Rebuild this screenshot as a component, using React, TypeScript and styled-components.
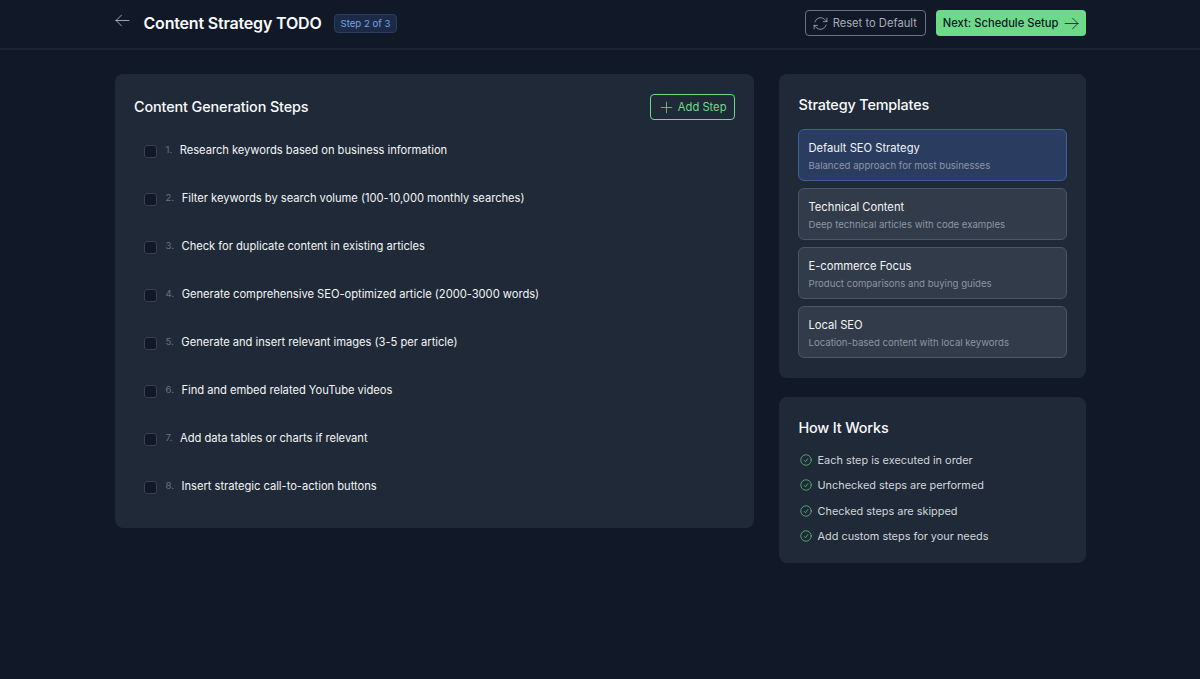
import styled, { createGlobalStyle } from 'styled-components';
import { HiOutlineArrowLeft, HiOutlineArrowPath, HiOutlineArrowRight, HiOutlineCheckCircle, HiOutlinePlus } from 'react-icons/hi2';

const steps = [
    'Research keywords based on business information',
    'Filter keywords by search volume (100-10,000 monthly searches)',
    'Check for duplicate content in existing articles',
    'Generate comprehensive SEO-optimized article (2000-3000 words)',
    'Generate and insert relevant images (3-5 per article)',
    'Find and embed related YouTube videos',
    'Add data tables or charts if relevant',
    'Insert strategic call-to-action buttons',
];

const templates = [
    { name: 'Default SEO Strategy', text: 'Balanced approach for most businesses', active: true },
    { name: 'Technical Content', text: 'Deep technical articles with code examples', active: false },
    { name: 'E-commerce Focus', text: 'Product comparisons and buying guides', active: false },
    { name: 'Local SEO', text: 'Location-based content with local keywords', active: false },
];

const rules = [
    'Each step is executed in order',
    'Unchecked steps are performed',
    'Checked steps are skipped',
    'Add custom steps for your needs',
];

export default function App() {
    return (
        <>
            <GlobalStyle />
            <Header>
                <HeaderInner>
                    <HeaderLeft>
                        <BackLink aria-label="Back">
                            <HiOutlineArrowLeft size={17} strokeWidth={1.1} />
                        </BackLink>
                        <Title>Content Strategy TODO</Title>
                        <StepBadge>Step 2 of 3</StepBadge>
                    </HeaderLeft>
                    <HeaderActions>
                        <ResetButton>
                            <HiOutlineArrowPath size={17} strokeWidth={1.1} />
                            Reset to Default
                        </ResetButton>
                        <NextButton>
                            Next: Schedule Setup
                            <HiOutlineArrowRight size={17} strokeWidth={1.1} />
                        </NextButton>
                    </HeaderActions>
                </HeaderInner>
            </Header>
            <Main>
                <StepsCard>
                    <StepsHeader>
                        <StepsTitle>Content Generation Steps</StepsTitle>
                        <AddButton>
                            <HiOutlinePlus size={17} strokeWidth={1.1} />
                            Add Step
                        </AddButton>
                    </StepsHeader>
                    <StepList>
                        {steps.map((step, i) => (
                            <StepRow key={step}>
                                <Checkbox />
                                <StepNumber>{i + 1}.</StepNumber>
                                <StepText>{step}</StepText>
                            </StepRow>
                        ))}
                    </StepList>
                </StepsCard>
                <Sidebar>
                    <SideCard>
                        <SideTitle>Strategy Templates</SideTitle>
                        <TemplateList>
                            {templates.map((t) => (
                                <TemplateItem key={t.name} $active={t.active}>
                                    <TemplateName>{t.name}</TemplateName>
                                    <TemplateText>{t.text}</TemplateText>
                                </TemplateItem>
                            ))}
                        </TemplateList>
                    </SideCard>
                    <SideCard>
                        <SideTitle>How It Works</SideTitle>
                        <RuleList>
                            {rules.map((rule) => (
                                <RuleItem key={rule}>
                                    <HiOutlineCheckCircle size={14} strokeWidth={1.1} color="#6fd98a" />
                                    {rule}
                                </RuleItem>
                            ))}
                        </RuleList>
                    </SideCard>
                </Sidebar>
            </Main>
        </>
    );
}

const GlobalStyle = createGlobalStyle`
    html, body {
        margin: 0;
        min-height: 100%;
        background: #111827;
        font-family: Inter, "Liberation Sans", sans-serif;
        color: #f3f4f6;
    }
    * {
        box-sizing: border-box;
    }
`;

const Header = styled.header`
    height: 50px;
    border-bottom: 2px solid #1c2431;
`;

const HeaderInner = styled.div`
    width: 971px;
    margin: 0 auto;
    height: 100%;
    display: flex;
    justify-content: space-between;
    padding-top: 10px;
`;

const HeaderLeft = styled.div`
    display: flex;
    align-items: flex-start;
`;

const BackLink = styled.a`
    width: 30px;
    height: 20px;
    margin-left: -1px;
    color: #c7ccd4;
    display: flex;
    align-items: center;
`;

const Title = styled.h1`
    margin: 3px 12px 0 0;
    font-size: 16px;
    line-height: 20px;
    letter-spacing: -0.18px;
    font-weight: 600;
    color: #f9fafb;
`;

const StepBadge = styled.span`
    margin-top: 4px;
    height: 19px;
    padding: 0 6px;
    display: flex;
    align-items: center;
    font-size: 9.6px;
    color: #7aa2e3;
    background: #1c2a48;
    border: 1px solid #2b3c60;
    border-radius: 4px;
`;

const HeaderActions = styled.div`
    display: flex;
    gap: 10px;
`;

const ResetButton = styled.button`
    height: 26px;
    padding: 0 8px 0 6px;
    display: flex;
    align-items: center;
    gap: 4px;
    font-family: inherit;
    font-size: 11.2px;
    color: #a8aeb9;
    background: transparent;
    border: 1px solid #6b7280;
    border-radius: 4px;
`;

const NextButton = styled.button`
    height: 26px;
    padding: 0 6px 0 7px;
    display: flex;
    align-items: center;
    gap: 4px;
    font-family: inherit;
    font-size: 11.2px;
    font-weight: 500;
    color: #111827;
    background: #6fd98a;
    border: none;
    border-radius: 4px;
`;

const Main = styled.main`
    width: 971px;
    margin: 24px auto 0;
    display: grid;
    grid-template-columns: 639px 307px;
    gap: 25px;
    align-items: start;
`;

const StepsCard = styled.section`
    height: 454px;
    padding: 20px 19px 20px 19.5px;
    background: #1f2937;
    border-radius: 8px;
`;

const StepsHeader = styled.div`
    display: flex;
    justify-content: space-between;
    align-items: center;
    height: 26px;
    margin-bottom: 15px;
`;

const StepsTitle = styled.h2`
    margin: 0 0 2px;
    font-size: 14.4px;
    font-weight: 500;
    letter-spacing: -0.12px;
    color: #f9fafb;
`;

const AddButton = styled.button`
    height: 26px;
    padding: 0 7px;
    display: flex;
    align-items: center;
    gap: 3px;
    font-family: inherit;
    font-size: 11.2px;
    color: #6fd98a;
    background: transparent;
    border: 1px solid #6fd98a;
    border-radius: 4px;
`;

const StepList = styled.ol`
    list-style: none;
    margin: 0;
    padding: 0 0 0 9.5px;
`;

const StepRow = styled.li`
    height: 48px;
    padding-top: 8px;
    display: flex;
    align-items: flex-start;
`;

const Checkbox = styled.span`
    width: 13px;
    height: 13px;
    margin-top: 2px;
    margin-right: 9px;
    background: #111827;
    border: 1px solid #374151;
    border-radius: 3px;
`;

const StepNumber = styled.span`
    margin-right: 7.5px;
    font-size: 9.6px;
    line-height: 14px;
    color: #6b7280;
`;

const StepText = styled.span`
    font-size: 11.2px;
    line-height: 14px;
    letter-spacing: -0.03px;
    color: #f3f4f6;
`;

const Sidebar = styled.aside`
    display: flex;
    flex-direction: column;
    gap: 19px;
`;

const SideCard = styled.section`
    padding: 20px 19px 20px 19.5px;
    background: #1f2937;
    border-radius: 8px;
`;

const SideTitle = styled.h2`
    margin: 0 0 13px;
    padding-left: 0.5px;
    font-size: 14.4px;
    line-height: 22px;
    font-weight: 500;
    letter-spacing: -0.15px;
    color: #f9fafb;
`;

const TemplateList = styled.div`
    display: flex;
    flex-direction: column;
    gap: 7px;
`;

const TemplateItem = styled.div<{ $active: boolean }>`
    height: 52px;
    padding: 11px 9.5px 0;
    background: ${({ $active }) => ($active ? '#2a3d61' : '#323b4a')};
    border: 1px solid ${({ $active }) => ($active ? '#3f5f98' : '#4b5563')};
    border-radius: 6px;
`;

const TemplateName = styled.div`
    font-size: 11.2px;
    line-height: 14px;
    color: #f3f4f6;
`;

const TemplateText = styled.div`
    margin-top: 4px;
    font-size: 9.6px;
    line-height: 13px;
    color: #8d95a3;
`;

const RuleList = styled.ul`
    list-style: none;
    margin: 14px 0 0;
    padding: 0 0 0 0.5px;
    display: flex;
    flex-direction: column;
    gap: 11.3px;
`;

const RuleItem = styled.li`
    display: flex;
    align-items: center;
    gap: 5px;
    font-size: 10.9px;
    line-height: 14px;
    color: #d1d5db;
`;
